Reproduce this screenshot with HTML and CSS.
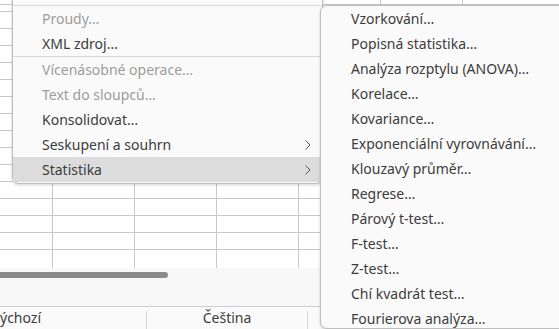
FILE: index.html
```html
<!DOCTYPE html>
<html lang="cs">
<head>
<meta charset="utf-8">
<title>Statistika</title>
<link rel="stylesheet" href="styles.css">
</head>
<body>
<div class="screen">
  <div class="sheet">
    <div class="grid"></div>
    <div class="hscroll"><div class="thumb"></div></div>
    <div class="statusbar">
      <div class="status-cell style">ýchozí</div>
      <div class="status-cell lang">Čeština</div>
      <div class="status-cell rest"></div>
    </div>
  </div>

  <div class="menu main-menu">
    <div class="menu-cut"></div>
    <div class="sep"></div>
    <div class="item disabled">Proudy…</div>
    <div class="item">XML zdroj…</div>
    <div class="sep"></div>
    <div class="item disabled">Vícenásobné operace…</div>
    <div class="item disabled">Text do sloupců…</div>
    <div class="item">Konsolidovat…</div>
    <div class="item has-sub">Seskupení a souhrn
      <svg class="chev" width="6" height="10" viewBox="0 0 6 10"><polyline points="0.5,0.5 5,5 0.5,9.5" fill="none" stroke="#555" stroke-width="1"/></svg>
    </div>
    <div class="item has-sub active">Statistika
      <svg class="chev" width="6" height="10" viewBox="0 0 6 10"><polyline points="0.5,0.5 5,5 0.5,9.5" fill="none" stroke="#555" stroke-width="1"/></svg>
    </div>
  </div>

  <div class="menu sub-menu">
    <div class="item">Vzorkování…</div>
    <div class="item">Popisná statistika…</div>
    <div class="item">Analýza rozptylu (ANOVA)…</div>
    <div class="item">Korelace…</div>
    <div class="item">Kovariance…</div>
    <div class="item">Exponenciální vyrovnávání…</div>
    <div class="item">Klouzavý průměr…</div>
    <div class="item">Regrese…</div>
    <div class="item">Párový t-test…</div>
    <div class="item">F-test…</div>
    <div class="item">Z-test…</div>
    <div class="item">Chí kvadrát test…</div>
    <div class="item">Fourierova analýza…</div>
  </div>
</div>
</body>
</html>
```

FILE: styles.css
```css
* { box-sizing: border-box; }
html, body { margin: 0; padding: 0; }
body {
  font-family: "Noto Sans", "Open Sans", sans-serif;
  font-size: 14px;
  color: #3c3c3c;
  background: #ffffff;
}
.screen {
  position: relative;
  width: 559px;
  height: 329px;
  overflow: hidden;
}
.sheet {
  display: flex;
  flex-direction: column;
  height: 329px;
}
.grid {
  flex: 0 0 268px;
  background-color: #ffffff;
  background-image:
    linear-gradient(#c6c6c6, #c6c6c6),
    repeating-linear-gradient(to bottom, transparent 0 16px, #c8c8c8 16px 17px),
    repeating-linear-gradient(to right, transparent 0 81px, #c8c8c8 81px 82px);
  background-size: 100% 1px, 100% 255px, 100% 100%;
  background-position: 0 4px, 0 -5px, -29px 0;
  background-repeat: no-repeat, no-repeat, repeat-y;
}
.hscroll {
  flex: 0 0 38px;
  background: #f8f8f8;
  padding-top: 4px;
}
.thumb {
  width: 174px;
  height: 6px;
  margin-left: -6px;
  border-radius: 3px;
  background: #8a8a8a;
}
.statusbar {
  flex: 0 0 23px;
  display: flex;
  border-top: 1px solid #cdcdcd;
  background: #fafafa;
  font-size: 14px;
  padding-top: 4px;
}
.status-cell {
  display: flex;
  align-items: center;
  height: 18px;
  line-height: 1;
  margin-top: 0;
}
.status-cell.style {
  width: 147px;
  border-right: 1px solid #d6d6d6;
  padding-bottom: 4px;
}
.status-cell.lang {
  width: 161px;
  justify-content: center;
  border-right: 1px solid #d6d6d6;
  padding-bottom: 4px;
}

.menu {
  position: absolute;
  background: #fafafa;
  border: 1px solid #bdbdbd;
  box-shadow: 0 1px 3px rgba(0,0,0,0.18);
}
.main-menu {
  left: 12px;
  top: -21px;
  width: 311px;
  border-radius: 7px;
  padding-bottom: 1px;
}
.menu-cut { height: 25px; }
.sep {
  height: 1px;
  background: #dadada;
}
.item {
  height: 25px;
  display: flex;
  align-items: center;
  white-space: nowrap;
}
.main-menu .item { padding-left: 29px; padding-right: 11px; }
.item.disabled { color: #9c9c9c; }
.item.has-sub { justify-content: space-between; }
.item.active { background: #dcdcdc; }
.chev { display: block; }

.sub-menu {
  left: 320px;
  top: 5px;
  width: 260px;
  height: 324px;
  border-radius: 7px 0 0 7px;
  overflow: hidden;
  z-index: 2;
}
.sub-menu .item { padding-left: 30px; }
```
